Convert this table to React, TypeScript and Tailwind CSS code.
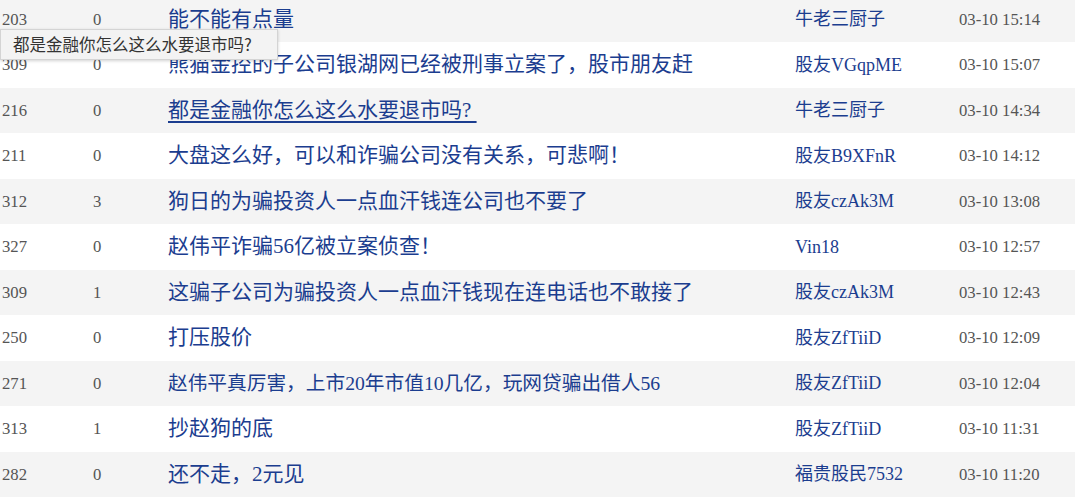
import React from "react";

type Row = { views: string; replies: string; title: string; author: string; time: string; hover?: boolean; small?: boolean };

const rows: Row[] = [
  { views: "203", replies: "0", title: "能不能有点量", author: "牛老三厨子", time: "03-10 15:14" },
  { views: "309", replies: "0", title: "熊猫金控的子公司银湖网已经被刑事立案了，股市朋友赶", author: "股友VGqpME", time: "03-10 15:07" },
  { views: "216", replies: "0", title: "都是金融你怎么这么水要退市吗?\u00a0", author: "牛老三厨子", time: "03-10 14:34", hover: true },
  { views: "211", replies: "0", title: "大盘这么好，可以和诈骗公司没有关系，可悲啊！", author: "股友B9XFnR", time: "03-10 14:12" },
  { views: "312", replies: "3", title: "狗日的为骗投资人一点血汗钱连公司也不要了", author: "股友czAk3M", time: "03-10 13:08" },
  { views: "327", replies: "0", title: "赵伟平诈骗56亿被立案侦查！", author: "Vin18", time: "03-10 12:57" },
  { views: "309", replies: "1", title: "这骗子公司为骗投资人一点血汗钱现在连电话也不敢接了", author: "股友czAk3M", time: "03-10 12:43" },
  { views: "250", replies: "0", title: "打压股价", author: "股友ZfTiiD", time: "03-10 12:09" },
  { views: "271", replies: "0", title: "赵伟平真厉害，上市20年市值10几亿，玩网贷骗出借人56", author: "股友ZfTiiD", time: "03-10 12:04", small: true },
  { views: "313", replies: "1", title: "抄赵狗的底", author: "股友ZfTiiD", time: "03-10 11:31" },
  { views: "282", replies: "0", title: "还不走，2元见", author: "福贵股民7532", time: "03-10 11:20" },
];

const font = { fontFamily: '"Liberation Serif", "Noto Sans CJK SC", serif' };

export default function App() {
  return (
    <div className="relative w-[1080px] h-[501px] overflow-hidden bg-white">
      <div className="w-[1075px] mt-[-3px] flex flex-col" style={font}>
        {rows.map((r, i) => (
          <div
            key={i}
            className={
              "flex items-center " +
              (i % 2 === 0 ? "h-[45px] bg-[#f4f4f4]" : "h-[46px] bg-white")
            }
          >
            <div className="w-[93px] pl-[2px] text-[16.7px] text-[#555555] leading-normal">{r.views}</div>
            <div className="w-[75px] text-[16.7px] text-[#555555] leading-normal">{r.replies}</div>
            <div className="w-[627px] whitespace-nowrap">
              <a
                className={
                  "leading-normal text-[#1b3d8f] " +
                  (r.small ? "text-[19.7px] " : "text-[21px] ") +
                  (r.hover ? "underline underline-offset-[4px]" : "")
                }
              >
                {r.title}
              </a>
            </div>
            <div className="w-[164px] text-[18px] leading-normal text-[#1b3d8f] whitespace-nowrap">{r.author}</div>
            <div className="text-[16.7px] leading-normal text-[#555555] whitespace-nowrap">{r.time}</div>
          </div>
        ))}
      </div>
      <div
        className="absolute left-0 top-[29px] h-[31px] w-[278px] flex items-center pl-[12px] bg-[#f3f3f3] border border-[#d4d4d4] shadow-[0_1px_3px_rgba(0,0,0,0.18)] text-[16.5px] text-[#333333] leading-normal whitespace-nowrap"
        style={{ fontFamily: '"Noto Sans CJK SC", "Noto Sans", sans-serif' }}
      >
        都是金融你怎么这么水要退市吗?
      </div>
    </div>
  );
}
